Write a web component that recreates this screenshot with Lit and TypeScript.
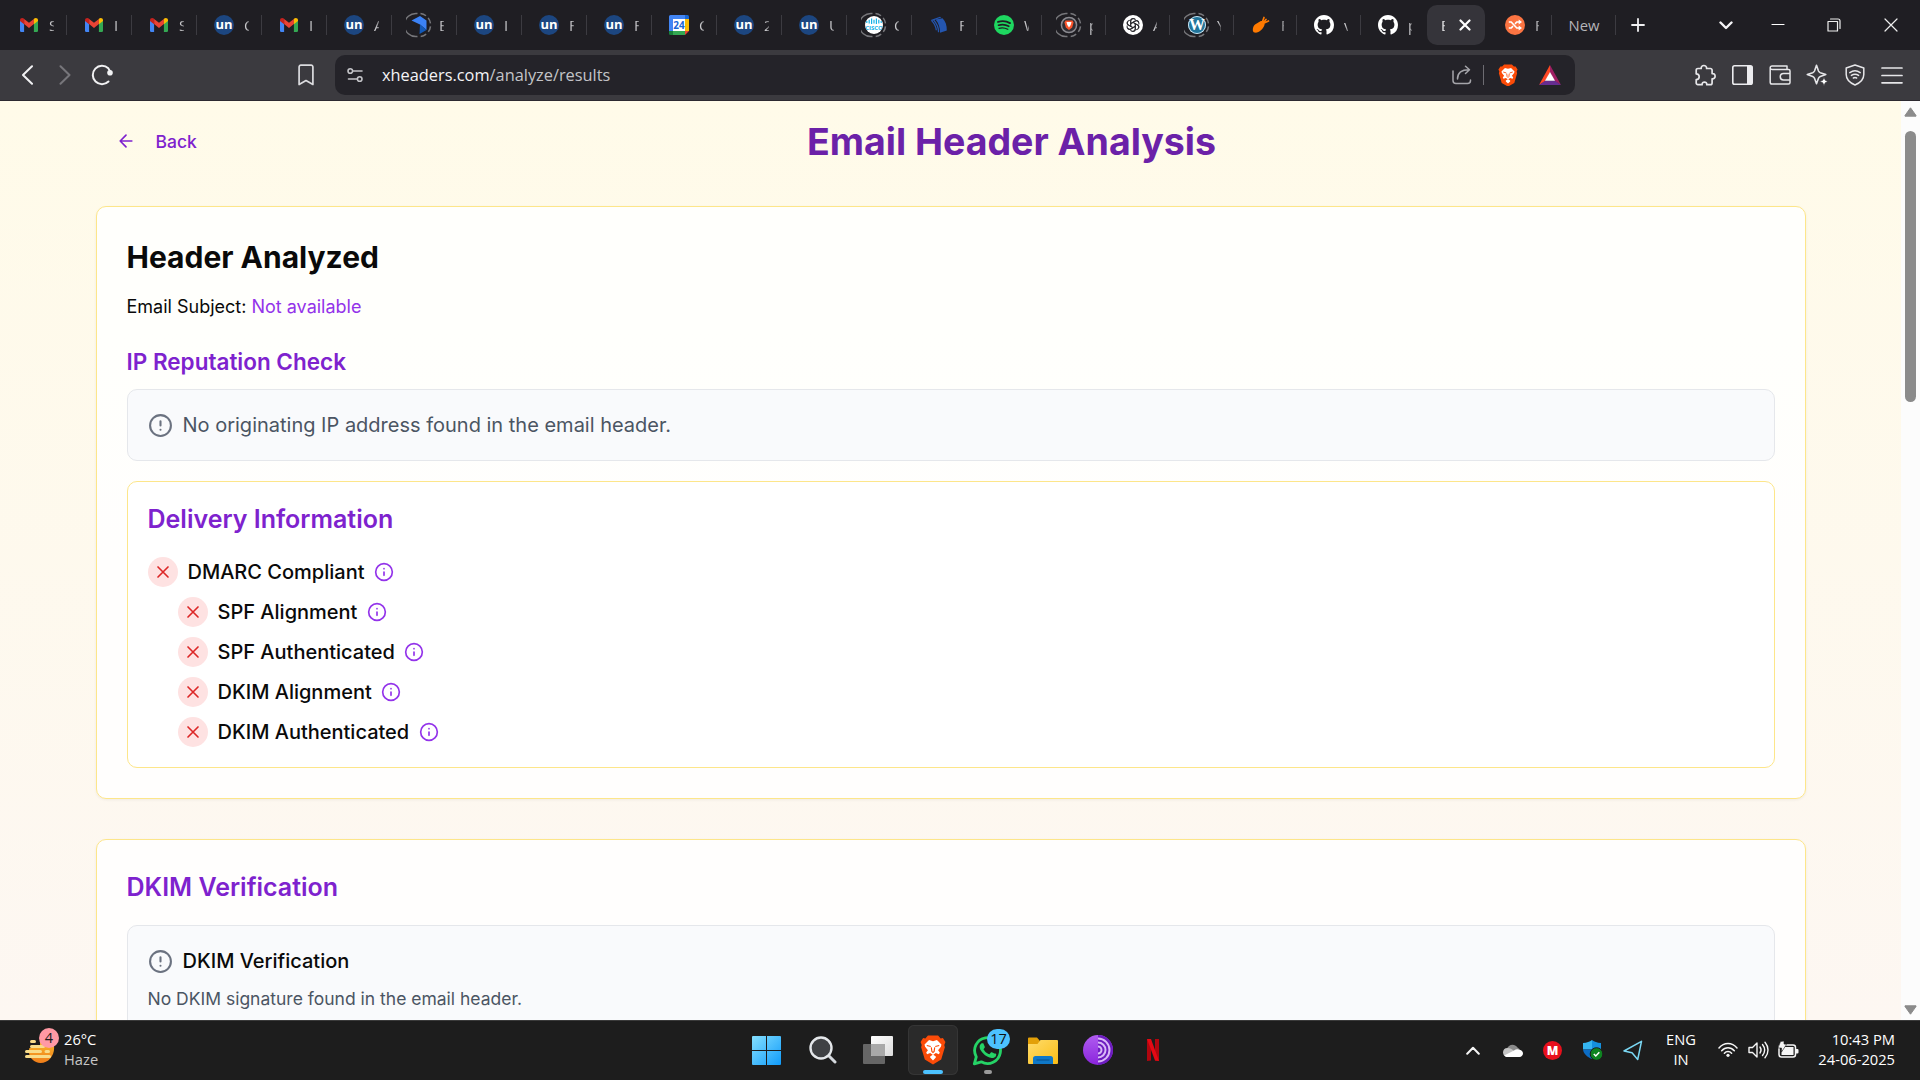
import { LitElement, html, css, TemplateResult } from "lit";
import { customElement } from "lit/decorators.js";

type Icon = TemplateResult;

/* ---------- favicons ---------- */
const gmail = html`<svg width="18" height="14" viewBox="0 0 18 14">
  <path fill="#4285f4" d="M0 2.4 4.1 5.4V14H1.2A1.2 1.2 0 0 1 0 12.8z" />
  <path fill="#34a853" d="M18 2.4 13.9 5.4V14h2.9a1.2 1.2 0 0 0 1.2-1.2z" />
  <path fill="#ea4335" d="M4.1 1.1 9 4.8l4.9-3.7v5L9 9.9 4.1 6.1z" />
  <path fill="#c5221f" d="M0 2.2C0 .2 2.300-.7 4.100.7V6.200L0 3.100z" />
  <path fill="#fbbc04" d="M18 2.200C18 .2 15.700-.7 13.900.7V6.200L18 3.100z" />
</svg>`;
const un = html`<span class="un">un</span>`;
const ring = html`<svg class="ring" width="26" height="26" viewBox="0 0 26 26" fill="none" stroke="#77777b" stroke-width="1.5">
  <path d="M11.500 1.500A11.600 11.600 0 1 0 11.500 24.500" />
  <path d="M14.500 1.500A11.600 11.600 0 0 1 14.500 24.500" stroke-dasharray="6 3" />
</svg>`;
const kite = html`${ring}<svg width="18" height="20" viewBox="0 0 18 20">
  <path fill="#3b82f6" d="M1.500 5.500 10 1l6.500 4.500V15L10 9.500z" />
  <path fill="#1259b8" d="M10 9.500 16.500 15 9.500 19z" />
</svg>`;
const calendar = html`<span class="cal"><svg width="20" height="20" viewBox="0 0 20 20">
  <path fill="#fff" d="M4 4h12v12H4z" /><path fill="#4285f4" d="M0 1.500A1.500 1.500 0 0 1 1.500 0H16v4H4v12H0z" />
  <path fill="#1967d2" d="M16 0h2.500A1.500 1.500 0 0 1 20 1.500V4h-4z" /><path fill="#fbbc04" d="M16 4h4v12h-4z" />
  <path fill="#34a853" d="M4 16h12v4H4z" /><path fill="#188038" d="M0 16h4v4H1.500A1.500 1.500 0 0 1 0 18.500z" />
  <path fill="#ea4335" d="M16 16h4l-4 4z" /></svg><b>24</b></span>`;
const cisco = html`${ring}<span class="cisco"><svg width="16" height="7" viewBox="0 0 16 7" stroke="#14b1e7" stroke-width="1.200">
  <path d="M.8 3v2M3.200 1.800v3.600M5.600.5v5.500M8 1.800v3.600M10.400.5v5.500M12.800 1.800v3.600M15.200 3v2" /></svg><i>CISCO</i></span>`;
const book = html`<svg width="18" height="18" viewBox="0 0 18 18"><path fill="#2456b0" d="M5.500 3.600 12.500 2.200C15.500 5 17 9.500 16.800 14.500L10 16.800C10.200 11.500 8.500 7 5.500 3.600z" />
  <path fill="none" stroke="#2456b0" stroke-width="1.200" d="M3.600 4C6.800 7.500 8.700 11.500 8.500 16.300M1.600 4.600C4.500 7.500 6 10.500 6.300 14.300" /><path fill="#2456b0" d="M.8 4 10 .8l1.300.8L1.800 5z" /></svg>`;
const spotify = html`<svg width="20" height="20" viewBox="0 0 20 20"><circle cx="10" cy="10" r="10" fill="#1ed760" />
  <path fill="none" stroke="#1f1e23" stroke-linecap="round" stroke-width="1.900" d="M4 6.900c4-1.200 8.500-.8 12 1.200" />
  <path fill="none" stroke="#1f1e23" stroke-linecap="round" stroke-width="1.600" d="M4.500 10.200c3.500-1 7.300-.6 10.300 1.100" />
  <path fill="none" stroke="#1f1e23" stroke-linecap="round" stroke-width="1.300" d="M5 13.300c3-.8 6-.5 8.800 1" /></svg>`;
const lion = (s: number): Icon => html`<svg width=${s} height=${s * 1.13} viewBox="0 0 46 52">
  <path fill="#fb4b08" d="M14 1h18l4.500 5 4-.5 4.500 7-2 5 1 4-6.500 22L23 52 8.500 43.500 2 21.500l1-4-2-5 4.500-7 4 .5z" />
  <path fill="#fff" d="M23 11l7-2 8 8-1 4-5 6 3 4-1.500 3-5.500-2-4.500 3 4.500 3v2L23 45l-5-5v-2l4.500-3L18 32l-5.500 2L11 31l3-4-5-6-1-4 8-8z" />
  <path fill="none" stroke="#fb4b08" stroke-width="2" d="M12 18.500l7 2M34 18.500l-7 2M20 22l1 7 2 2 2-2 1-7" /></svg>`;
const braveTab = html`${ring}<svg class="over" width="18" height="18" viewBox="0 0 18 18"><circle cx="9" cy="9" r="7.600" fill="#302f35" stroke="#8a8a90" stroke-width="1.500" />
  <path fill="#fb542b" d="M5.500 4.500h7l1 2-1.300 5L9 14l-3.200-2.500-1.300-5z" /><path fill="#fff" d="M6.500 6h5l-.8 3L9 11.500 7.300 9z" /></svg>`;
const gpt = html`<svg width="20" height="20" viewBox="0 0 20 20"><circle cx="10" cy="10" r="10" fill="#fff" />
  <g fill="none" stroke="#2b2b30" stroke-width="1.050">
    ${[0, 60, 120, 180, 240, 300].map((a) => html`<svg width="20" height="20" viewBox="0 0 20 20" overflow="visible"><path transform="rotate(${a} 10 10)" d="M7.700 11.300V6.300a2.600 2.600 0 0 1 4.800-1.400M7.700 8.700 12.200 6a2.600 2.600 0 0 1 3.500 1" /></svg>`)}
  </g></svg>`;
const wordpress = html`${ring}<span class="wp">W</span>`;
const carrot = html`<svg width="18" height="18" viewBox="0 0 18 18"><path fill="#ff7a00" d="M8 5.500c3-1.500 5.500 1 4.300 4C11 13 6.500 17.500 2.500 16.500-.3 15.700.7 10.500 3 8.500z" />
  <path stroke="#ff7a00" stroke-width="1.700" stroke-linecap="round" d="m10 7 2-5.500M11 7l3-3.500M11.500 7.300 16.500 5" /></svg>`;
const github = html`<svg width="20" height="20" viewBox="0 0 16 16" fill="#fff"><path d="M8 0C3.580 0 0 3.580 0 8c0 3.540 2.290 6.530 5.470 7.590.4.070.55-.17.55-.38 0-.19-.01-.82-.01-1.490-2.010.37-2.530-.49-2.690-.94-.09-.23-.48-.94-.82-1.130-.28-.15-.68-.52-.01-.53.63-.01 1.080.58 1.230.82.72 1.210 1.870.87 2.330.66.070-.52.28-.87.51-1.070-1.780-.2-3.640-.89-3.640-3.950 0-.87.31-1.590.82-2.150-.08-.2-.36-1.020.08-2.120 0 0 .67-.21 2.200.82.64-.18 1.320-.27 2-.27.68 0 1.360.09 2 .27 1.530-1.040 2.200-.82 2.200-.82.44 1.100.16 1.920.08 2.120.51.56.82 1.270.82 2.150 0 3.070-1.870 3.750-3.650 3.950.29.25.54.73.54 1.480 0 1.070-.01 1.930-.01 2.200 0 .21.15.46.55.38A8.013 8.013 0 0 0 16 8c0-4.420-3.580-8-8-8z" /></svg>`;
const shuffle = html`<svg width="20" height="20" viewBox="0 0 20 20"><circle cx="10" cy="10" r="10" fill="#fb7442" />
  <path fill="none" stroke="#fff" stroke-width="1.600" d="M3.800 7h2.400l5.600 6h2.700M3.800 13h2.400l1.800-1.900M10 8.900 11.800 7h2.700" /><path fill="#fff" d="m13.700 4.600 3.300 2.400-3.300 2.400zM13.700 10.600l3.300 2.400-3.300 2.400z" /></svg>`;

interface Tab { icon: Icon | null; label: string; width: number; active?: boolean; bare?: boolean; }
const tabs: Tab[] = [
  { icon: gmail, label: "S", width: 65 }, { icon: gmail, label: "I", width: 65 }, { icon: gmail, label: "S", width: 65 },
  { icon: un, label: "C", width: 65 }, { icon: gmail, label: "I", width: 65 }, { icon: un, label: "A", width: 65 },
  { icon: kite, label: "E", width: 65 }, { icon: un, label: "I", width: 65 }, { icon: un, label: "F", width: 65 },
  { icon: un, label: "F", width: 65 }, { icon: calendar, label: "C", width: 65 }, { icon: un, label: "2", width: 65 },
  { icon: un, label: "U", width: 65 }, { icon: cisco, label: "C", width: 65 }, { icon: book, label: "F", width: 65 },
  { icon: spotify, label: "W", width: 65 }, { icon: braveTab, label: "p", width: 64 }, { icon: gpt, label: "A", width: 64 },
  { icon: wordpress, label: "Y", width: 64 }, { icon: carrot, label: "F", width: 63 }, { icon: github, label: "v", width: 64 },
  { icon: github, label: "p", width: 64, bare: true }, { icon: null, label: "E", width: 63, active: true },
  { icon: shuffle, label: "F", width: 64 },
];

/* ---------- toolbar icons ---------- */
const stroke = (w: number, h: number, d: string, sw = 1.8, color = "#e6e6e9"): Icon =>
  html`<svg width=${w} height=${h} viewBox="0 0 ${w} ${h}" fill="none" stroke=${color} stroke-width=${sw} stroke-linecap="round" stroke-linejoin="round"><path d=${d} /></svg>`;

const back = stroke(12, 20, "M10 1.200 1 10l9 8.800", 2, "#f1f1f3");
const forward = stroke(12, 20, "M1.500 1.200 10.500 10l-9 8.800", 2, "#77767b");
const reload = html`<svg width="22" height="22" viewBox="0 0 22 22"><path fill="none" stroke="#f1f1f3" stroke-width="2" stroke-linecap="round" d="M17.500 17.500A9.200 9.200 0 1 1 17.300 4.300L19.500 8" /><circle cx="19" cy="8.800" r="2.800" fill="#f1f1f3" /></svg>`;
const bookmark = stroke(16, 22, "M3 1.200h10A1.800 1.800 0 0 1 14.900 3v17.500L8 16.500 1.100 20.500V3A1.800 1.800 0 0 1 3 1.200z", 1.700, "#dcdcdf");
const tune = stroke(16, 16, "M6 4h9M1.500 12H10M1 4a2.300 2.300 0 1 0 4.600 0A2.300 2.300 0 1 0 1 4M10.400 12a2.300 2.300 0 1 0 4.600 0 2.300 2.300 0 1 0-4.600 0", 1.600, "#c4c4c8");
const share = stroke(20, 20, "M1 6v9.500A3 3 0 0 0 4 18.500h11.500a3 3 0 0 0 3-3V15M5.500 14c0-6 4-9.200 11.500-9.200M13.500 1.200l4 3.600-4 3.700", 1.500, "#a5a5aa");
const bat = html`<svg width="22" height="20" viewBox="0 0 22 20"><path fill="#ff4724" d="M11 0v7.500L6.500 16 0 20z" /><path fill="#9e1f63" d="M11 0l11 20-6.500-4L11 7.500z" /><path fill="#662d91" d="M0 20l6.500-4.500h9L22 20z" /><path fill="#fff" d="m11 7 5 8.800H6z" /></svg>`;
const puzzle = stroke(22, 22, "M4 4.500h3.200c-.5-4 5.800-4 5.400 0h3.800a1.700 1.700 0 0 1 1.700 1.700v3.400c4-.7 4 5.700 0 5.200V19a1.700 1.700 0 0 1-1.700 1.700h-3.600c.3-3.500-5-3.500-4.700 0H4A1.700 1.700 0 0 1 2.200 19v-3.300c4-.2 4-5.500 0-5.800V6.200A1.700 1.700 0 0 1 4 4.500z", 1.700);
const sidebar = html`<svg width="21" height="20" viewBox="0 0 21 20"><rect x=".8" y=".8" width="19.400" height="18.400" rx="1.800" fill="none" stroke="#ececef" stroke-width="1.600" /><path fill="#ececef" d="M15 1h4.500l.7.7v16.600l-.7.7H15z" /></svg>`;
const wallet = stroke(22, 20, "M3 1h15v3M1.200 2.800A1.800 1.800 0 0 1 3 1M1.200 2.800c0 1 .8 1.600 1.800 1.600h16.500a1.500 1.500 0 0 1 1.500 1.500V17.500a1.500 1.500 0 0 1-1.500 1.500h-16.500a1.800 1.800 0 0 1-1.800-1.800zM21 8.500h-6.500a3.200 3.200 0 0 0 0 6.500H21z", 1.500);
const sparkle = html`<svg width="22" height="22" viewBox="0 0 22 22"><path fill="none" stroke="#e6e6e9" stroke-width="1.600" stroke-linejoin="round" d="M10.500 1.200 12.500 7c.5 1 .8 1.300 1.800 1.700L19.800 10.500l-5.500 2c-1 .4-1.400.8-1.800 1.800L10.500 19.800l-2-5.500c-.4-1-.8-1.400-1.800-1.800L1.300 10.500 6.700 8.700C7.700 8.300 8 8 8.500 7z" /><path fill="#fff" stroke="#3b3a3f" stroke-width=".8" d="m18 13 1.300 3.200L22 17.500l-2.700 1.300-1.300 3.200-1.300-3.200-3.200-1.300 3.200-1.300z" /></svg>`;
const vpn = stroke(20, 22, "M10 1 18.800 4v6.500c0 5-4 8.500-8.800 10.500-4.800-2-8.800-5.500-8.800-10.500V4zM4.800 8.600c3.200-2.400 7.200-2.400 10.400 0M6.400 11.400c2.200-1.500 5-1.500 7.200 0M8.400 14c1-.6 2.200-.6 3.200 0", 1.500);
const burger = stroke(22, 18, "M1 2h20M1 9.500h20M1 16.800h20", 1.700);

/* ---------- page icons ---------- */
const arrowLeft = html`<svg width="20" height="20" viewBox="0 0 24 24" fill="none" stroke="currentColor" stroke-width="2" stroke-linecap="round" stroke-linejoin="round"><path d="m12 19-7-7 7-7M19 12H5" /></svg>`;
const alertIcon = html`<svg width="25" height="25" viewBox="0 0 24 24" fill="none" stroke="#6b7280" stroke-width="2" stroke-linecap="round"><circle cx="12" cy="12" r="10" /><path d="M12 8v4M12 16h.01" /></svg>`;
const cross = html`<svg width="20" height="20" viewBox="0 0 24 24" fill="none" stroke="#dc2626" stroke-width="2" stroke-linecap="round"><path d="M18 6 6 18M6 6l12 12" /></svg>`;
const info = html`<svg width="20" height="20" viewBox="0 0 24 24" fill="none" stroke="#9333ea" stroke-width="2" stroke-linecap="round"><circle cx="12" cy="12" r="10" /><path d="M12 16v-4M12 8h.01" /></svg>`;

/* ---------- taskbar icons ---------- */
const windowsLogo = html`<svg width="29" height="29" viewBox="0 0 29 29"><defs><linearGradient id="w" x1="0" y1="0" x2="29" y2="29" gradientUnits="userSpaceOnUse"><stop stop-color="#85e0ff" /><stop offset="1" stop-color="#109bfa" /></linearGradient></defs><path fill="url(#w)" d="M0 1a1 1 0 0 1 1-1h13v14H0zM15 0h13a1 1 0 0 1 1 1v13H15zM0 15h14v14H1a1 1 0 0 1-1-1zM15 15h14v13a1 1 0 0 1-1 1H15z" /></svg>`;
const search = html`<svg width="28" height="28" viewBox="0 0 28 28"><path stroke="#d5d9de" stroke-width="3" stroke-linecap="round" d="m19.500 19.500 6.500 6.500" /><circle cx="12" cy="12" r="10.500" fill="#3f4144" stroke="#e4e7ea" stroke-width="2.400" /></svg>`;
const taskView = html`<svg width="30" height="28" viewBox="0 0 30 28"><defs><linearGradient id="t" x2="1" y2="1"><stop stop-color="#fff" /><stop offset="1" stop-color="#dcdcdc" /></linearGradient></defs><rect y="8" width="22" height="20" rx="1" fill="#666" /><rect x="8" width="22" height="20" rx="1" fill="url(#t)" /><path fill="#a9a9a9" d="M8 8h14v12H9a1 1 0 0 1-1-1z" /></svg>`;
const whatsapp = html`<svg width="31" height="31" viewBox="0 0 24 24"><path fill="none" stroke="#25d366" stroke-width="2.200" stroke-linejoin="round" d="m1.800 22.300 1.500-5.400A10 10 0 1 1 7.200 20.800z" /><path fill="#25d366" d="M17.300 14.400c-.3-.2-1.700-.9-2-1-.3-.1-.5-.1-.7.200l-.9 1.100c-.2.200-.3.200-.6.100-.3-.2-1.300-.5-2.400-1.500-.9-.8-1.500-1.800-1.700-2.100-.1-.3 0-.4.200-.6l.4-.5.300-.5c.1-.2 0-.4 0-.5L9 6.900c-.2-.6-.5-.5-.7-.5h-.5c-.2 0-.5.100-.8.400-.3.300-1.100 1-1.100 2.500s1.100 2.900 1.200 3.100c.2.200 2.100 3.200 5.100 4.500 3 1.200 3.600 1 4.200.9.600 0 1.900-.8 2.100-1.500.3-.7.300-1.300.2-1.500-.1-.2-.3-.3-.6-.4z" /></svg>`;
const folder = html`<svg width="30" height="27" viewBox="0 0 30 27"><defs><linearGradient id="f" x2="1" y2="1"><stop stop-color="#ffdc6b" /><stop offset="1" stop-color="#fbbd16" /></linearGradient></defs><path fill="#e3a008" d="M0 1.500A1 1 0 0 1 1 .5h8l3 3.500-1 6H0z" /><path fill="url(#f)" d="M0 7h9.500l3-4H29a1 1 0 0 1 1 1v22a1 1 0 0 1-1 1H1a1 1 0 0 1-1-1z" /><path fill="#0f78c8" d="M5 27v-5.500A2.500 2.500 0 0 1 7.500 19h15a2.500 2.500 0 0 1 2.500 2.500V27z" /><path stroke="#094e8a" d="M8.500 23h13" /></svg>`;
const tor = html`<svg width="30" height="30" viewBox="0 0 30 30"><defs><linearGradient id="o" y2="1" x2="0"><stop stop-color="#b05cf0" /><stop offset="1" stop-color="#8a24dc" /></linearGradient></defs><circle cx="15" cy="15" r="15" fill="url(#o)" /><path fill="#6d1cc0" d="M15 0a15 15 0 0 1 0 30z" /><path fill="none" stroke="#d9b8f7" stroke-width="2" d="M15 3.500a11.500 11.500 0 0 1 0 23M15 7.500a7.500 7.500 0 0 1 0 15M15 11.500a3.500 3.500 0 0 1 0 7" /></svg>`;
const netflix = html`<svg width="12" height="22" viewBox="0 0 12 22"><path fill="#b1060f" d="M0 0h4v21.500L0 22zM8 0h4v22l-4-.5z" /><path fill="#e50914" d="M0 0h4l8 22-4-.5z" /></svg>`;
const haze = html`<svg width="30" height="24" viewBox="0 0 30 24"><defs><linearGradient id="h" x2="0" y2="1"><stop stop-color="#fbc02d" /><stop offset="1" stop-color="#ef7d1a" /></linearGradient></defs><path fill="url(#h)" d="M4 11a13 13 0 0 1 25-4c1 9-5 17-13.500 17C9 24 3 18 4 11z" /><path stroke="#1d1d1d" stroke-width="9" d="M0 4.500h15" /><path stroke="#f8dc8a" stroke-width="3" stroke-linecap="round" d="M6.500 2.500h3M6.500 7.500h12M1.500 12.500h14M21 12.500h2.500M1.500 17.500h23" /></svg>`;
const chevUp = stroke(14, 9, "M1.200 7.800 7 1.800l5.800 6", 2, "#f5f5f5");
const cloud = html`<svg width="20" height="13" viewBox="0 0 20 13"><path fill="#8b8b8b" d="M4 5C5 1 11-1.500 14.500 3.500L17 5.500 8 9z" /><path fill="#c5c5c5" d="M4.500 4C1.500 4 0 6 0 8.500 0 11 2 13 4.500 13L11 7C9 5 7 4 4.500 4z" /><path fill="#fff" d="M1.200 11.500 11 6.500c2-1.500 4-1.500 5.500-.7C19 6.200 20 8 20 9.500S18.500 13 16.500 13h-12c-1.500 0-2.500-.6-3.300-1.500z" /></svg>`;
const mega = html`<span class="mega">M</span>`;
const shield = html`<svg width="20" height="20" viewBox="0 0 20 20"><path fill="#35b5f1" d="M0 3c4-.2 6.500-1.200 9-3v9.500H0z" /><path fill="#1490df" d="M9 0c2.500 1.800 5 2.800 9 3v6.500H9z" /><path fill="#0c6cc4" d="M0 9.500h9V19C4 17 .5 13.500 0 9.500z" /><path fill="#0b58ab" d="M9 9.500h9C17.500 13.500 14 17 9 19z" /><circle cx="13.500" cy="14" r="6.300" fill="#0e8420" stroke="#1d1d1d" /><path fill="none" stroke="#fff" stroke-width="1.500" d="m10.800 14 2 2 3.500-3.700" /></svg>`;
const plane = stroke(20, 21, "M18.500 1.300 1 11l8 1.700 5.700 6.800z", 1.500, "#7ad7f3");
const wifi = html`<svg width="20" height="16" viewBox="0 0 20 16" fill="none" stroke="#f5f5f5" stroke-width="1.500" stroke-linecap="round"><path d="M1 6C6 .1 14 .1 19 6M3.700 8.700c3.600-4 9-4 12.600 0M6.400 11.200c2-2.300 5.200-2.300 7.200 0" /><circle cx="10" cy="13.300" r="1.600" fill="#f5f5f5" stroke="none" /></svg>`;
const speaker = stroke(21, 18, "M1 6.500h3.500L9 2v14l-4.500-4.500H1zM12 6c1.300 1.800 1.300 4.200 0 6M14.500 3.500c2.600 3.300 2.600 7.700 0 11M17 1.200c4 4.700 4 11 0 15.600", 1.400, "#f5f5f5");
const battery = html`<svg width="21" height="18" viewBox="0 0 21 18"><rect x="1" y="4" width="16.500" height="12" rx="2.500" fill="none" stroke="#f5f5f5" stroke-width="1.500" /><path fill="#f5f5f5" d="M6 6h9.500v8H3.500v-2.500zM18 8h1.500a1 1 0 0 1 1 1v2.500a1 1 0 0 1-1 1H18z" /><path fill="#f5f5f5" stroke="#1d1d1d" stroke-width=".6" d="M2.500.5 6 0v3l2.500.5L3.500 11V7H0z" /></svg>`;

const checks = [
  { label: "DMARC Compliant", nested: false },
  { label: "SPF Alignment", nested: true },
  { label: "SPF Authenticated", nested: true },
  { label: "DKIM Alignment", nested: true },
  { label: "DKIM Authenticated", nested: true },
];

@customElement("browser-chrome")
class BrowserChrome extends LitElement {
  static styles = css`
    :host { display: block; flex: none; height: 101px; background: #3b3a3f; font-family: "Open Sans", "Noto Sans", sans-serif; box-sizing: border-box; border-bottom: 1px solid #2c2930; }
    svg { display: block; flex: none; }
    .strip { height: 50px; background: #1f1e23; display: flex; align-items: center; padding-left: 2px; }
    .tab { flex: none; box-sizing: border-box; height: 20px; display: flex; align-items: center; border-right: 1px solid #3c3b41; }
    .tab.bare { border-right-color: transparent; }
    .fav { position: relative; flex: none; width: 26px; height: 26px; margin-left: 14px; display: flex; align-items: center; justify-content: center; }
    .ring { position: absolute; left: 0; top: 0; }
    .label { flex: none; margin: 0 12px 0 7px; flex: 1; min-width: 0; overflow: hidden; font-size: 15px; line-height: 22px; color: #c9c9cc; -webkit-mask-image: linear-gradient(90deg, #000 40%, rgba(0, 0, 0, .45)); }
    .tab.active { height: 40px; border: 0; margin: 0 3px 0 2px; width: 58px; border-radius: 10px; background: #35343a; }
    .tab.active .label { flex: none; margin: 0 0 0 14px; width: 4px; color: #fff; }
    .tab.active svg { margin-left: 14px; }
    .tab.new { width: 64px; padding-left: 16.500px; font-size: 14.800px; line-height: 22px; color: #b5b5b9; }
    .un { width: 20px; height: 20px; border-radius: 50%; background: #1c4680; color: #fff; font: 700 13px/18px "Open Sans", sans-serif; text-align: center; }
    .cal { position: relative; width: 20px; height: 20px; }
    .cal b { position: absolute; left: 0; top: 0; width: 20px; text-align: center; font: 700 10px/20px "Open Sans", sans-serif; color: #1a66d8; }
    .cisco { width: 18px; height: 18px; border-radius: 50%; background: #fff; overflow: hidden; display: flex; flex-direction: column; align-items: center; padding-top: 2px; box-sizing: border-box; }
    .cisco i { font: 700 6px/7px "Open Sans", sans-serif; color: #14b1e7; }
    .wp { display: flex; justify-content: center; width: 18px; height: 18px; border-radius: 50%; background: #21759b; box-shadow: inset 0 0 0 1px #cfe3ee; color: #fff; font: 700 16px/18px "Liberation Serif", serif; }
    .win { flex: 1; display: flex; align-items: center; }
    .win span { display: flex; justify-content: center; flex: none; width: 46px; }
    .win .plus { margin-left: -1px; }
    .win .menu { margin-left: 42px; }
    .win .min { margin-left: 5.500px; }
    .win .max { margin-left: 10px; }
    .win .close { margin-left: 11.500px; }
    .bar { height: 50px; display: flex; align-items: center; padding: 0 9px 0 9.500px; }
    .cell { flex: none; width: 37px; display: flex; justify-content: center; }
    .mark { margin-left: 167px; margin-right: 10.500px; }
    .omni { flex: none; width: 1240px; height: 40px; border-radius: 10px; background: #242329; box-sizing: border-box; display: flex; align-items: center; padding: 0 14px 0 12px; }
    .url { flex: 1; padding-left: 19px; font-size: 16.350px; line-height: 24px; color: #f4f4f6; }
    .url i { font-style: normal; color: #c3c3c7; }
    .sep { width: 1px; height: 20px; background: #6d6c72; margin: 0 14.500px 0 10.500px; }
    .omni .bat { margin-left: 21px; }
    .right { margin-left: auto; display: flex; }
    .right .cell { width: 37.500px; height: 24px; align-items: center; }
  `;
  render() {
    return html`
      <div class="strip">
        ${tabs.map((t) => t.active
          ? html`<div class="tab active"><span class="label">${t.label}</span>${stroke(12, 12, "M1.500 1.500l9 9M10.500 1.500l-9 9", 2.2, "#fff")}</div>`
          : html`<div class="tab ${t.bare ? "bare" : ""}" style="width:${t.width}px"><span class="fav">${t.icon}</span><span class="label">${t.label}</span></div>`)}
        <div class="tab new">New</div>
        <div class="win">
          <span class="plus">${stroke(14, 14, "M7 1v12M1 7h12", 1.8, "#f0f0f2")}</span>
          <span class="menu">${stroke(14, 9, "M1.500 1.500 7 7l5.500-5.500", 2.4, "#f5f5f7")}</span>
          <span class="min">${stroke(14, 4, "M1 1.500h12", 1.2, "#fff")}</span>
          <span class="max">${stroke(14, 14, "M1 3.500h9.500V13H1zM3.500 1H11a2 2 0 0 1 2 2v7.500", 1.2, "#eee")}</span>
          <span class="close">${stroke(14, 14, "M1 1l12 12M13 1 1 13", 1.2, "#eee")}</span>
        </div>
      </div>
      <div class="bar">
        <span class="cell">${back}</span><span class="cell">${forward}</span><span class="cell">${reload}</span>
        <span class="cell mark">${bookmark}</span>
        <div class="omni">${tune}<span class="url">xheaders.com<i>/analyze/results</i></span>${share}<span class="sep"></span>${lion(20)}<span class="bat">${bat}</span></div>
        <div class="right">${[puzzle, sidebar, wallet, sparkle, vpn, burger].map((i) => html`<span class="cell">${i}</span>`)}</div>
      </div>`;
  }
}

@customElement("results-page")
class ResultsPage extends LitElement {
  static styles = css`
    :host { display: flex; flex: 1; min-height: 0; overflow: hidden; font-family: Inter, sans-serif; color: #0a0a0a; }
    svg { display: block; flex: none; }
    h1, h2, h3, p { margin: 0; }
    .page { flex: 1; box-sizing: border-box; padding: 15px 95px 0 96px; overflow: hidden; background: linear-gradient(180deg, #fffbe9, #fdf7f2); }
    .head { display: flex; align-items: center; height: 50px; margin-bottom: 40px; }
    .back { display: flex; align-items: center; gap: 19.500px; width: 121px; box-sizing: border-box; padding-left: 20px; font-size: 17.500px; font-weight: 500; color: #7e22ce; }
    h1 { flex: 1; text-align: center; font-size: 37.500px; line-height: 45px; font-weight: 700; color: #6b21a8; }
    .card { box-sizing: border-box; border: 1px solid #fde68a; border-radius: 10px; background: rgba(255, 255, 255, .85); padding: 30px 30px 30px 29.500px; margin-bottom: 40px; box-shadow: 0 1px 3px rgba(0, 0, 0, .06); }
    .card.tall { height: 593px; }
    h2 { font-size: 30px; line-height: 40px; font-weight: 700; }
    .subject { margin-top: 17px; font-size: 18px; line-height: 25px; }
    .subject span { color: #9333ea; }
    h3 { font-size: 22.500px; line-height: 35px; font-weight: 600; color: #7e22ce; margin-top: 25px; }
    h3.big { font-size: 25px; margin-top: 0; }
    .note { border: 1px solid #e5e7eb; border-radius: 10px; background: #f9fafc; padding: 20px; }
    .note.ip { box-sizing: border-box; height: 72px; margin-top: 10px; }
    .row { display: flex; align-items: center; gap: 10px; height: 30px; font-size: 20px; color: #4b5563; }
    .row.strong { color: #0a0a0a; font-weight: 500; }
    .note p { margin-top: 10px; font-size: 17.500px; line-height: 25px; color: #4b5563; }
    .box { border: 1px solid #fde68a; border-radius: 10px; background: #fff; padding: 20px; margin-top: 20px; }
    .note.dkim { margin-top: 20px; height: 140px; }
    .list { display: flex; flex-direction: column; gap: 10px; margin-top: 20px; }
    .check { display: flex; align-items: center; gap: 10px; height: 30px; font-size: 20px; font-weight: 500; }
    .check svg { margin-left: -.5px; }
    .check .dot svg { margin: 0; }
    .check.nested { padding-left: 30px; }
    .dot { width: 30px; height: 30px; border-radius: 50%; background: #fee2e2; display: flex; align-items: center; justify-content: center; }
    .scroll { width: 19px; background: #fcfcfc; display: flex; flex-direction: column; align-items: center; box-sizing: border-box; padding: 6px 0 5px; }
    .thumb { width: 11px; height: 271px; border-radius: 6px; background: #8b8b8b; margin-top: 14px; margin-bottom: auto; }
  `;
  render() {
    return html`
      <div class="page">
        <div class="head"><span class="back">${arrowLeft}<span>Back</span></span><h1>Email Header Analysis</h1></div>
        <section class="card tall">
          <h2>Header Analyzed</h2>
          <p class="subject">Email Subject: <span>Not available</span></p>
          <h3>IP Reputation Check</h3>
          <div class="note ip"><div class="row">${alertIcon}<span>No originating IP address found in the email header.</span></div></div>
          <div class="box">
            <h3 class="big">Delivery Information</h3>
            <div class="list">
              ${checks.map((c) => html`<div class="check ${c.nested ? "nested" : ""}"><span class="dot">${cross}</span><span>${c.label}</span>${info}</div>`)}
            </div>
          </div>
        </section>
        <section class="card">
          <h3 class="big">DKIM Verification</h3>
          <div class="note dkim">
            <div class="row strong">${alertIcon}<span>DKIM Verification</span></div>
            <p>No DKIM signature found in the email header.</p>
          </div>
        </section>
      </div>
      <div class="scroll">
        <svg width="13" height="10" viewBox="0 0 13 10"><path fill="#8b8b8b" stroke="#8b8b8b" stroke-linejoin="round" d="M6.500.8 12 8.500v.7H1v-.7z" /></svg>
        <span class="thumb"></span>
        <svg width="13" height="10" viewBox="0 0 13 10"><path fill="#8b8b8b" stroke="#8b8b8b" stroke-linejoin="round" d="M6.500 9.200 12 1.500V.8H1v.7z" /></svg>
      </div>`;
  }
}

@customElement("task-bar")
class TaskBar extends LitElement {
  static styles = css`
    :host { display: flex; position: relative; flex: none; height: 60px; box-sizing: border-box; border-top: 1px solid #3a3a3a; background: #1d1d1d; color: #fff; font-family: "Open Sans", "Noto Sans", sans-serif; font-size: 14.700px; line-height: 20px; }
    svg { display: block; flex: none; }
    .weather { position: relative; display: flex; width: 740px; padding-left: 25px; box-sizing: border-box; }
    .weather svg { margin-top: 18px; }
    .weather div { margin: 8px 0 0 9px; }
    .dim { color: #c6c6c6; }
    .badge { position: absolute; width: 20px; height: 20px; border-radius: 50%; background: #ff99a4; color: #1a1a1a; text-align: center; left: 39px; top: 7px; font-size: 14.500px; }
    .badge.blue { background: #4cc2ff; width: 23px; left: 27px; top: 8px; border-radius: 10px; color: #111; }
    .apps { display: flex; }
    .app { position: relative; width: 55px; height: 58px; display: flex; align-items: center; justify-content: center; }
    .app:first-child svg { margin-right: 1.500px; }
    .app.on::before { content: ""; position: absolute; left: 2.500px; top: 4px; width: 50px; height: 50px; border-radius: 6px; background: #2a2a2a; box-shadow: inset 0 0 0 1px #353535; }
    .app svg { position: relative; }
    .app.on::after, .app.run::after { content: ""; position: absolute; left: 17.500px; top: 49px; width: 20px; height: 4px; border-radius: 2px; background: #4cc2ff; }
    .app.run::after { left: 23.500px; width: 8px; background: #9a9a9a; }
    .tray { margin-left: auto; display: flex; align-items: center; padding: 0 25px 1px 0; }
    .tray .t { width: 40px; display: flex; justify-content: center; }
    .tray .s { width: 30px; display: flex; justify-content: center; }
    .lang { width: 60px; text-align: center; margin: 0 2px 2px -1.500px; }
    .clock { text-align: right; width: 92px; margin-bottom: 2px; }
    .mega { width: 19px; height: 19px; border-radius: 50%; background: #e8101c; color: #fff; font: 800 12px/19px "Open Sans", sans-serif; text-align: center; }
  `;
  render() {
    return html`
      <div class="weather">${haze}<span class="badge">4</span><div>26°C<br /><span class="dim">Haze</span></div></div>
      <div class="apps">
        <span class="app">${windowsLogo}</span><span class="app">${search}</span><span class="app">${taskView}</span>
        <span class="app on">${lion(26)}</span>
        <span class="app run">${whatsapp}<span class="badge blue">17</span></span>
        <span class="app">${folder}</span><span class="app">${tor}</span><span class="app">${netflix}</span>
      </div>
      <div class="tray">
        <span class="t">${chevUp}</span><span class="t">${cloud}</span><span class="t">${mega}</span><span class="t">${shield}</span><span class="t">${plane}</span>
        <div class="lang">ENG<br />IN</div>
        <span class="s">${wifi}</span><span class="s">${speaker}</span><span class="s">${battery}</span>
        <div class="clock">10:43 PM<br />24-06-2025</div>
      </div>`;
  }
}

@customElement("app-root")
class AppRoot extends LitElement {
  static styles = css`
    :host { display: flex; flex-direction: column; width: 1920px; height: 1080px; overflow: hidden; }
  `;
  render() {
    return html`<browser-chrome></browser-chrome><results-page></results-page><task-bar></task-bar>`;
  }
}
